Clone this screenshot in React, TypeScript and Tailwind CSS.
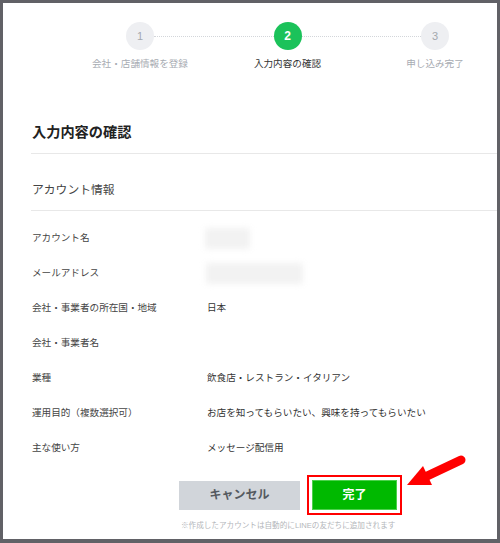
import React from 'react';

const font = { fontFamily: '"Liberation Sans", "Noto Sans CJK JP", sans-serif' };

const steps = [
  { n: '1', label: '会社・店舗情報を登録', active: false },
  { n: '2', label: '入力内容の確認', active: true },
  { n: '3', label: '申し込み完了', active: false },
];

const rows: { label: string; value?: string; blur?: string }[] = [
  { label: 'アカウント名', blur: 'w-[45px]' },
  { label: 'メールアドレス', blur: 'w-[97px] ml-[1px]' },
  { label: '会社・事業者の所在国・地域', value: '日本' },
  { label: '会社・事業者名' },
  { label: '業種', value: '飲食店・レストラン・イタリアン' },
  { label: '運用目的（複数選択可）', value: 'お店を知ってもらいたい、興味を持ってもらいたい' },
  { label: '主な使い方', value: 'メッセージ配信用' },
];

function Step({ n, label, active }: { n: string; label: string; active: boolean }) {
  return (
    <div className="flex w-[28px] flex-col items-center">
      <div
        className={
          active
            ? 'flex h-[28px] w-[28px] items-center justify-center rounded-full bg-[#1bc25a] text-[12px] font-bold text-white'
            : 'flex h-[28px] w-[28px] items-center justify-center rounded-full bg-[#eeeff2] text-[11px] text-[#a3a8ae]'
        }
      >
        {n}
      </div>
      <span
        className={
          active
            ? 'mt-[7px] whitespace-nowrap text-[9.6px] leading-[14px] text-[#333]'
            : 'mt-[7px] whitespace-nowrap text-[9.6px] leading-[14px] text-[#a7abb2]'
        }
      >
        {label}
      </span>
    </div>
  );
}

export default function App() {
  return (
    <div className="h-[543px] w-[500px] bg-[#616166] px-[3px] pb-[4px] pt-[3px]" style={font}>
      <div className="relative flex h-full w-full flex-col overflow-hidden bg-white">
        {/* stepper */}
        <div className="ml-[123px] mt-[19px] flex w-[323px] items-start">
          <Step {...steps[0]} />
          <div className="mt-[14px] flex-1 border-t border-dotted border-[#d3d6da]" />
          <Step {...steps[1]} />
          <div className="mt-[14px] flex-1 border-t border-dotted border-[#d3d6da]" />
          <Step {...steps[2]} />
        </div>

        <div className="ml-[28px] mt-[41px]">
          <div className="flex h-[42px] items-center border-b border-[#e8e8e8]">
            <h1 className="pl-[1px] text-[14.2px] font-bold text-[#222]">入力内容の確認</h1>
          </div>
          <div className="flex h-[57px] items-center border-b border-[#e8e8e8] pt-[18px]">
            <h2 className="pl-[1px] text-[11.8px] text-[#444]">アカウント情報</h2>
          </div>

          <div className="mt-[10px] flex flex-col">
            {rows.map((r) => (
              <div key={r.label} className="grid h-[35px] grid-cols-[174px_1fr] items-center text-[9.6px] text-[#444]">
                <span className="pl-[1px]">{r.label}</span>
                {r.blur ? (
                  <div className={`h-[21px] rounded-[2px] bg-[#f2f2f2] blur-[3px] ${r.blur}`} />
                ) : (
                  <span className="pl-[2px] text-[#333]">{r.value}</span>
                )}
              </div>
            ))}
          </div>
        </div>

        {/* actions */}
        <div className="ml-[176px] mt-[9px] flex items-center gap-[7px]">
          <button className="flex h-[29px] w-[121px] items-center justify-center bg-[#d1d5da] text-[12px] font-bold text-[#555a60]">
            キャンセル
          </button>
          <div className="border-2 border-[#ff0000] p-[3px]">
            <button className="flex h-[30px] w-[85px] items-center justify-center border border-[#4cd14c] bg-[#00b900] text-[12px] font-bold text-white">
              完了
            </button>
          </div>
        </div>
        <p className="ml-[178px] mt-[5px] whitespace-nowrap text-[7.6px] text-[#b3b6ba]">
          ※作成したアカウントは自動的にLINEの友だちに追加されます
        </p>

        {/* annotation arrow */}
        <svg className="absolute left-[392px] top-[442px]" width="75" height="50" viewBox="0 0 75 50">
          <line x1="66" y1="15" x2="30" y2="32" stroke="#ff0000" strokeWidth="9" strokeLinecap="round" />
          <polygon points="12,40 28,21 37,40" fill="#ff0000" />
        </svg>
      </div>
    </div>
  );
}
